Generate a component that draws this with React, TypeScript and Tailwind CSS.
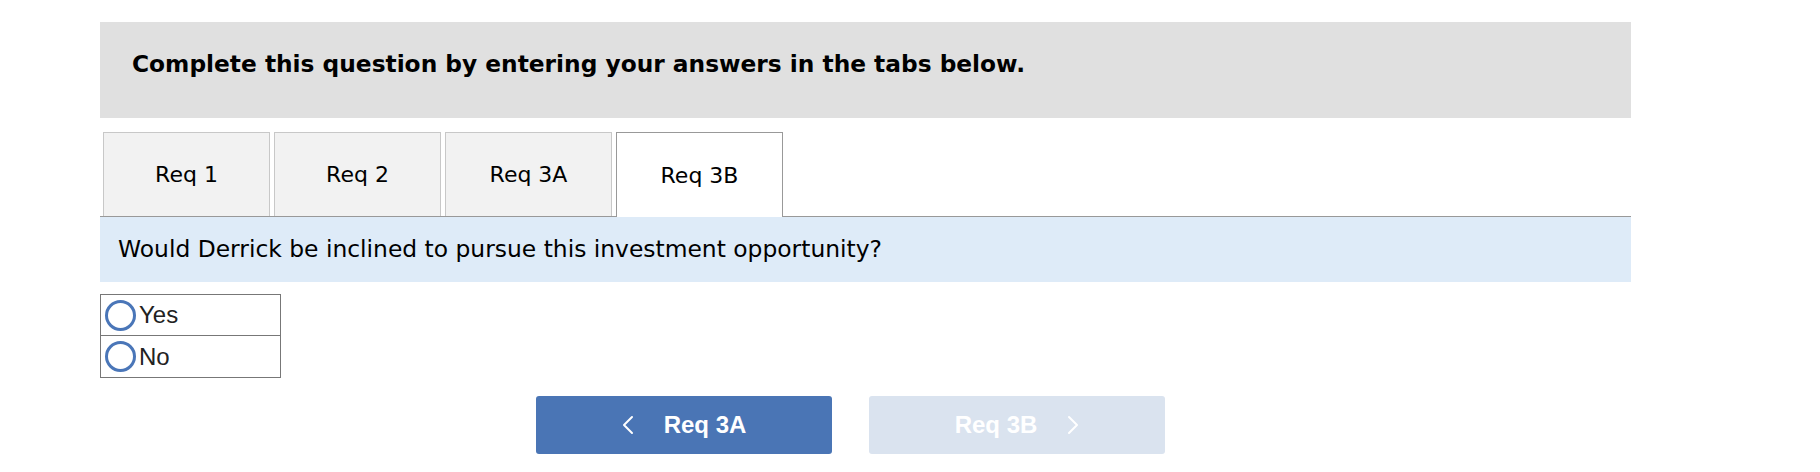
import { useState } from 'react';

const tabs = ['Req 1', 'Req 2', 'Req 3A', 'Req 3B'];

function Chevron({ dir }: { dir: 'left' | 'right' }) {
  return (
    <svg width="12" height="22" viewBox="0 0 12 22" fill="none">
      <polyline
        points={dir === 'left' ? '10,3 2,11 10,19' : '2,3 10,11 2,19'}
        stroke="currentColor"
        strokeWidth="2"
        strokeLinecap="round"
        strokeLinejoin="round"
      />
    </svg>
  );
}

export default function App() {
  const [active] = useState(3);
  const [answer, setAnswer] = useState<string | null>(null);

  return (
    <div className="min-h-[472px] bg-white pl-[100px] pt-[22px] font-['DejaVu_Sans',Verdana,sans-serif] text-black">
      <div className="w-[1531px]">
        {/* instructions */}
        <div className="h-[96px] bg-[#e0e0e0] pl-[32px] pt-[28px]">
          <p className="text-[23.3px] font-bold leading-[28px]">
            Complete this question by entering your answers in the tabs below.
          </p>
        </div>

        {/* tabs */}
        <div className="mt-[14px] flex gap-[4px] border-b border-[#999] pl-[3px]">
          {tabs.map((t, i) =>
            i === active ? (
              <div
                key={t}
                className="-mb-px flex h-[85px] w-[167px] items-center justify-center border border-b-0 border-[#999] bg-white text-[22px]"
              >
                {t}
              </div>
            ) : (
              <div
                key={t}
                className="flex h-[84px] w-[167px] items-center justify-center border border-b-0 border-[#c8c8c8] bg-[#f2f2f2] text-[22px]"
              >
                {t}
              </div>
            )
          )}
        </div>

        {/* question */}
        <div className="flex h-[65px] items-center bg-[#deebf8] pl-[18px] text-[23.4px]">
          Would Derrick be inclined to pursue this investment opportunity?
        </div>

        {/* options */}
        <div className="mt-[12px] w-[181px] border border-[#777] font-['Liberation_Sans',Arial,sans-serif] text-[24px] text-[#222]">
          {['Yes', 'No'].map((o, i) => (
            <label
              key={o}
              onClick={() => setAnswer(o)}
              className={`flex h-[41px] cursor-pointer items-center gap-[3px] pl-[4px] ${i === 0 ? 'border-b border-[#777]' : ''}`}
            >
              <span className="flex h-[31px] w-[31px] items-center justify-center rounded-full border-[3px] border-[#4a76b8]">
                {answer === o && <span className="h-[15px] w-[15px] rounded-full bg-[#4a76b8]" />}
              </span>
              {o}
            </label>
          ))}
        </div>

        {/* nav buttons */}
        <div className="ml-[436px] mt-[18px] flex gap-[37px] font-['Liberation_Sans',Arial,sans-serif] text-[24px] font-bold">
          <button className="flex h-[58px] w-[296px] items-center justify-center gap-[30px] rounded-[3px] bg-[#4a75b5] text-white">
            <Chevron dir="left" />
            <span>Req 3A</span>
          </button>
          <button className="flex h-[58px] w-[296px] items-center justify-center gap-[30px] rounded-[3px] bg-[#dae3ef] text-white">
            <span>Req 3B</span>
            <Chevron dir="right" />
          </button>
        </div>
      </div>
    </div>
  );
}
